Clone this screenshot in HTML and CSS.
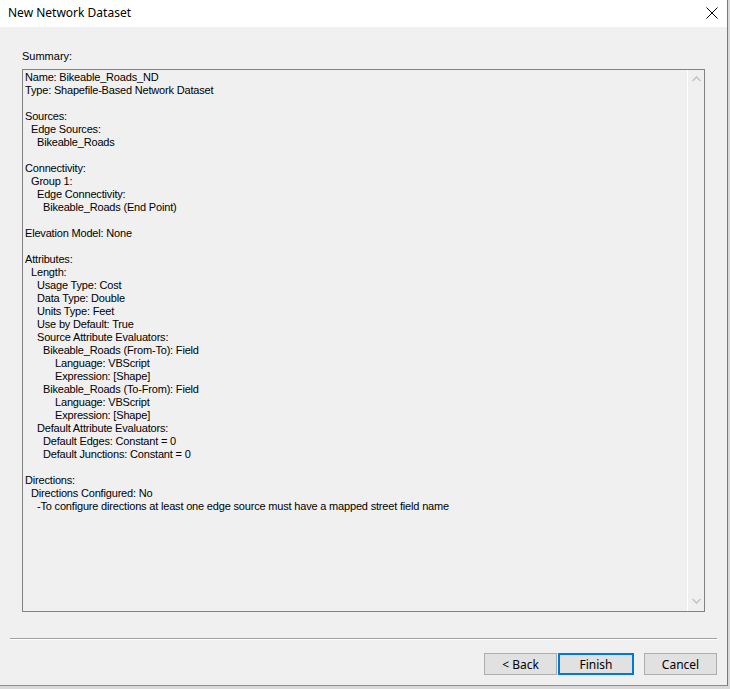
FILE: index.html
```html
<!DOCTYPE html>
<html lang="en">
<head>
    <meta charset="UTF-8">
    <title>New Network Dataset</title>
    <link rel="stylesheet" href="styles.css">
</head>
<body>

    <div class="window">
        <div class="titlebar">
            <span class="title">New Network Dataset</span>
            <span class="close">
                <svg width="12" height="12" viewBox="0 0 12 12"><path d="M0.5 0.5 L11.5 11.5 M11.5 0.5 L0.5 11.5" stroke="#000" stroke-width="1" fill="none"/></svg>
            </span>
        </div>

        <div class="content">
            <div class="label">Summary:</div>

            <div class="summary">
                <div class="lines">
                    <div class="l0">Name: Bikeable_Roads_ND</div>
                    <div class="l0">Type: Shapefile-Based Network Dataset</div>
                    <div class="blank"></div>
                    <div class="l0">Sources:</div>
                    <div class="l1">Edge Sources:</div>
                    <div class="l2">Bikeable_Roads</div>
                    <div class="blank"></div>
                    <div class="l0">Connectivity:</div>
                    <div class="l1">Group 1:</div>
                    <div class="l2">Edge Connectivity:</div>
                    <div class="l3">Bikeable_Roads (End Point)</div>
                    <div class="blank"></div>
                    <div class="l0">Elevation Model: None</div>
                    <div class="blank"></div>
                    <div class="l0">Attributes:</div>
                    <div class="l1">Length:</div>
                    <div class="l2">Usage Type: Cost</div>
                    <div class="l2">Data Type: Double</div>
                    <div class="l2">Units Type: Feet</div>
                    <div class="l2">Use by Default: True</div>
                    <div class="l2">Source Attribute Evaluators:</div>
                    <div class="l3">Bikeable_Roads (From-To): Field</div>
                    <div class="l5">Language: VBScript</div>
                    <div class="l5">Expression: [Shape]</div>
                    <div class="l3">Bikeable_Roads (To-From): Field</div>
                    <div class="l5">Language: VBScript</div>
                    <div class="l5">Expression: [Shape]</div>
                    <div class="l2">Default Attribute Evaluators:</div>
                    <div class="l3">Default Edges: Constant = 0</div>
                    <div class="l3">Default Junctions: Constant = 0</div>
                    <div class="blank"></div>
                    <div class="l0">Directions:</div>
                    <div class="l1">Directions Configured: No</div>
                    <div class="l2">-To configure directions at least one edge source must have a mapped street field name</div>
                </div>

                <!-- disabled vertical scrollbar -->
                <div class="scrollbar">
                    <svg width="9" height="6" viewBox="0 0 9 6"><path d="M0.5 5 L4.5 1 L8.5 5" stroke="#c2c2c2" stroke-width="1.3" fill="none"/></svg>
                    <svg width="9" height="6" viewBox="0 0 9 6"><path d="M0.5 1 L4.5 5 L8.5 1" stroke="#c2c2c2" stroke-width="1.3" fill="none"/></svg>
                </div>
            </div>
        </div>

        <div class="separator"></div>

        <div class="buttons">
            <button class="btn">&lt; Back</button>
            <button class="btn default">Finish</button>
            <button class="btn cancel">Cancel</button>
        </div>
    </div>

    <div class="behind"></div>

</body>
</html>
```

FILE: styles.css
```css
body {
    margin: 0;
    width: 730px;
    height: 689px;
    overflow: hidden;
    background: #d9d9d9;
    font-family: "Liberation Sans", Arial, sans-serif;
}
.window {
    width: 727px;
    height: 685px;
    background: #f0f0f0;
    border-right: 1px solid #2b8fd6;
    border-bottom: 1px solid #4aa3c8;
    display: flex;
    flex-direction: column;
}
.titlebar {
    height: 27px;
    background: #fff;
    display: flex;
    align-items: center;
    justify-content: space-between;
    padding: 0 9px 0 8px;
}
.title {
    font-family: "Noto Sans", "Liberation Sans", sans-serif;
    font-size: 12px;
    color: #000;
    padding-bottom: 2px;
}
.close {
    display: flex;
    padding-bottom: 2px;
}
.content {
    padding: 23px 22px 0 22px;
}
.label {
    font-size: 11px;
    height: 19px;
    color: #000;
}
.summary {
    height: 541px;
    border: 1px solid #828282;
    display: flex;
    justify-content: space-between;
}
.lines {
    padding: 1px 0 0 2px;
    font-size: 11px;
    line-height: 13px;
    color: #000;
    white-space: nowrap;
    letter-spacing: -0.18px;
}
.blank {
    height: 13px;
}
.l1 { padding-left: 6px; }
.l2 { padding-left: 12px; }
.l3 { padding-left: 18px; }
.l5 { padding-left: 30px; }
.scrollbar {
    width: 16px;
    border-left: 1px solid #fff;
    display: flex;
    flex-direction: column;
    justify-content: space-between;
    align-items: center;
    padding: 6px 0 7px;
}
.separator {
    margin: 26px 10px 0 10px;
    height: 1px;
    background: #a0a0a0;
    border-bottom: 1px solid #fff;
}
.buttons {
    display: flex;
    justify-content: flex-end;
    gap: 1px;
    padding: 13px 10px 0 0;
}
.btn {
    width: 73px;
    height: 22px;
    background: #e1e1e1;
    border: 1px solid #adadad;
    font-family: "Noto Sans", "Liberation Sans", sans-serif;
    font-size: 12px;
    color: #000;
    padding: 0;
}
.btn.default {
    width: 76px;
    border: 2px solid #0078d7;
}
.btn.cancel {
    margin-left: 9px;
}
.behind {
    height: 3px;
}
```
